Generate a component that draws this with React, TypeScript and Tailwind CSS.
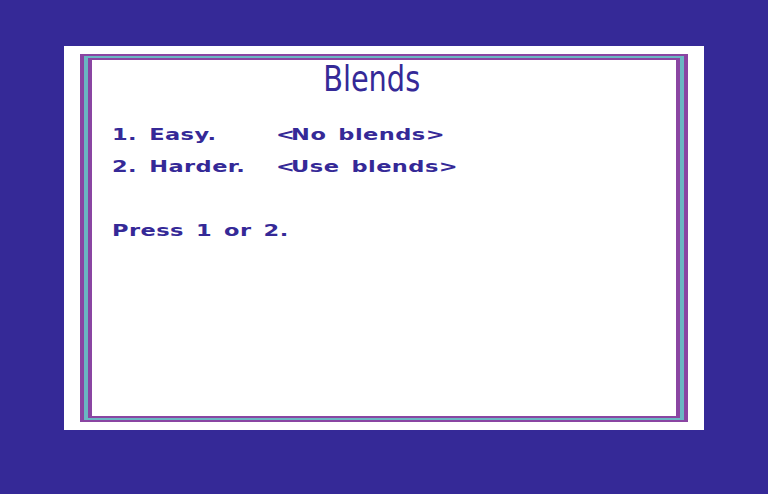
function Angle({ children }: { children: string }) {
  return <span className="tracking-[-2.5px]">{children}</span>;
}

export default function App() {
  const ink = "text-[#352997]";
  const line = "inline-block origin-left scale-x-[1.5] tracking-[0.3px] [word-spacing:2.5px] whitespace-pre";
  return (
    <div className="w-[768px] h-[494px] overflow-hidden bg-[#352997] pt-[46px] pl-[64px]">
      {/* outer white panel */}
      <div className="w-[640px] h-[384px] bg-white pt-[8px] pl-[16px]">
        {/* triple-line frame: purple / teal / purple */}
        <div className="w-[608px] h-[368px] bg-[#8a45a2] px-[4px] py-[2px]">
          <div className="w-full h-full bg-[#6ab7c2] px-[4px] py-[2px]">
            <div className="w-full h-full bg-[#8a45a2] px-[4px] py-[2px]">
              <div className="w-full h-full bg-white flex flex-col">
                <div className="-mt-[2px] flex justify-center pr-[24px]">
                  <span
                    className={`inline-block ${ink} text-[36px] leading-[42px] scale-x-[0.8]`}
                    style={{ fontFamily: '"DejaVu Sans", sans-serif' }}
                  >
                    Blends
                  </span>
                </div>
                <div
                  className={`pl-[20px] mt-[19px] ${ink} font-bold text-[15px] leading-[32px]`}
                  style={{ fontFamily: '"DejaVu Sans", sans-serif' }}
                >
                  <div className="grid grid-cols-[164px_1fr]">
                    <span className={line}>1. Easy.</span>
                    <span className={line}>
                      <Angle>&lt;</Angle>No blends<Angle>&gt;</Angle>
                    </span>
                  </div>
                  <div className="grid grid-cols-[164px_1fr]">
                    <span className={line}>2. Harder.</span>
                    <span className={line}>
                      <Angle>&lt;</Angle>Use blends<Angle>&gt;</Angle>
                    </span>
                  </div>
                  <div className="h-[32px]" />
                  <div>
                    <span className={line}>Press 1 or 2.</span>
                  </div>
                </div>
              </div>
            </div>
          </div>
        </div>
      </div>
    </div>
  );
}
